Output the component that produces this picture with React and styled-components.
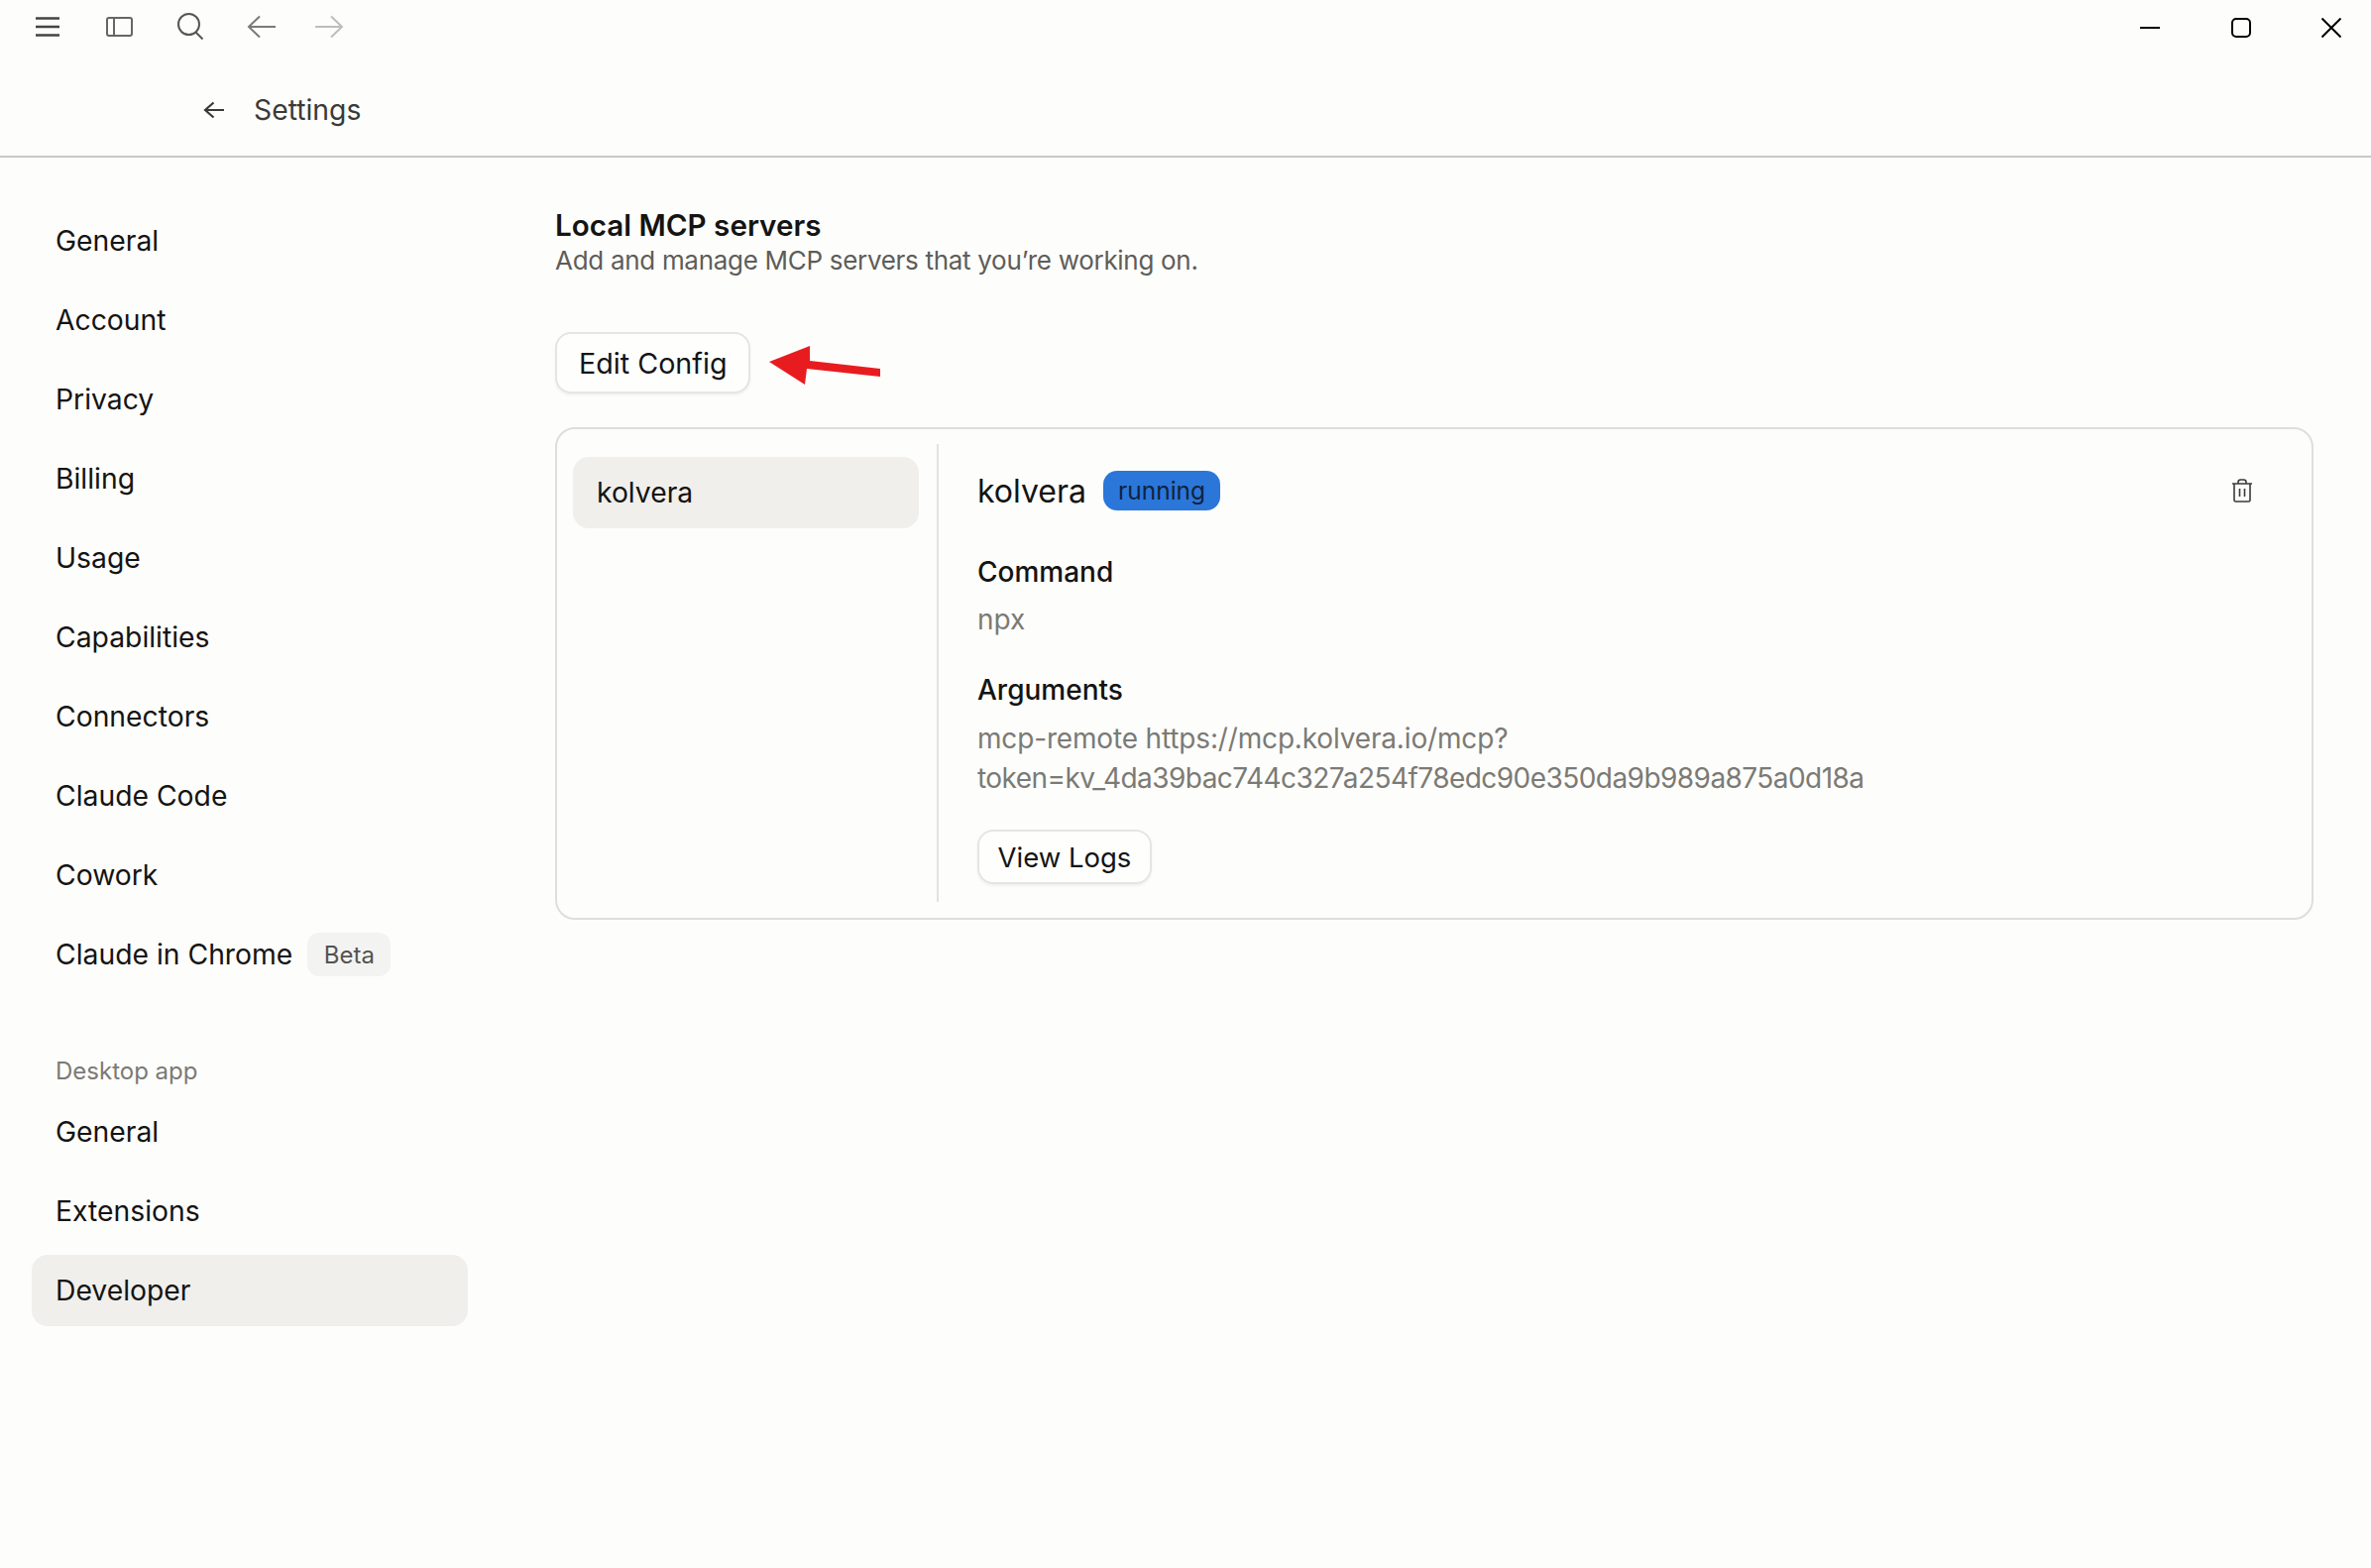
import React from 'react';
import styled, { createGlobalStyle } from 'styled-components';

const GlobalStyle = createGlobalStyle`
	html, body {
		margin: 0;
		padding: 0;
		background: #fdfdfb;
	}
	body {
		font-family: Inter, "Liberation Sans", sans-serif;
		color: #141413;
	}
	* {
		box-sizing: border-box;
	}
`;

const Page = styled.div`
	width: 2392px;
	height: 1582px;
	display: flex;
	flex-direction: column;
	background: #fdfdfb;
	overflow: hidden;
`;

const TitleBar = styled.div`
	height: 54px;
	display: flex;
	align-items: center;
	justify-content: space-between;
	padding: 0 30px 0 12px;
`;
const NavIcons = styled.div`
	display: flex;
`;
const WindowIcons = styled.div`
	display: flex;
	gap: 71.5px;
	padding-top: 1px;
`;
const Glyph = styled.svg`
	display: block;
	fill: none;
	stroke: ${(p) => p.$color || '#000'};
	stroke-width: ${(p) => p.$stroke || 2};
`;

const PageHeader = styled.header`
	height: 105px;
	display: flex;
	align-items: center;
	gap: 29px;
	padding: 10px 0 0 205px;
	border-bottom: 2px solid #c8c8c5;
`;
const PageTitle = styled.span`
	font-size: 28.3px;
	line-height: 36px;
	color: #3a3a38;
`;

const Body = styled.div`
	flex: 1;
	display: flex;
`;

const Sidebar = styled.nav`
	width: 560px;
	flex: none;
	display: flex;
	flex-direction: column;
	gap: 8px;
	padding: 48px 88px 0 32px;
`;
const NavItem = styled.div`
	height: 72px;
	display: flex;
	align-items: center;
	gap: 15px;
	padding-left: 24px;
	font-size: 28.3px;
	border-radius: 16px;
	background: ${(p) => (p.$active ? '#f0efec' : 'transparent')};
`;
const BetaTag = styled.span`
	height: 44px;
	padding: 0 16.5px;
	display: flex;
	align-items: center;
	font-size: 24px;
	color: #55544f;
	background: #f3f3f1;
	border-radius: 12px;
`;
const SectionLabel = styled.div`
	height: 40px;
	margin: 53px 0 -2px;
	padding-left: 24px;
	display: flex;
	align-items: center;
	font-size: 24px;
	color: #7b7a75;
`;

const Main = styled.main`
	flex: 1;
	min-width: 0;
	padding: 50px 58px 0 0;
`;
const Heading = styled.h1`
	margin: 0;
	font-size: 29.6px;
	line-height: 36px;
	font-weight: 600;
`;
const Subheading = styled.p`
	margin: 0;
	font-size: 26px;
	line-height: 36px;
	letter-spacing: -0.3px;
	color: #5e5d59;
`;
const ConfigRow = styled.div`
	display: flex;
	align-items: flex-start;
	margin: 54px 0 34px;
`;
const Button = styled.button`
	height: ${(p) => p.$height}px;
	padding: 0 ${(p) => p.$pad}px;
	display: flex;
	align-items: center;
	font-family: inherit;
	font-size: ${(p) => p.$size}px;
	color: #141413;
	background: #fefefd;
	border: 2px solid #e6e5e2;
	border-radius: 16px;
	box-shadow: 0 2px 3px rgba(0, 0, 0, 0.05);
`;
const Arrow = styled.svg`
	display: block;
	margin: 14px 0 0 19px;
	fill: #e81c1f;
`;

const ServerCard = styled.section`
	height: 497px;
	display: flex;
	padding: 15px 16px 16px;
	border: 2px solid #dededb;
	border-radius: 20px;
`;
const ServerList = styled.div`
	width: 369px;
	flex: none;
	padding: 13px 18px 0 0;
	border-right: 2px solid #e2e2df;
`;
const ServerItem = styled.div`
	height: 72px;
	display: flex;
	align-items: center;
	padding-left: 24px;
	font-size: 28.3px;
	background: #f0efec;
	border-radius: 16px;
`;
const ServerDetail = styled.div`
	flex: 1;
	min-width: 0;
	padding: 27px 44px 0 39px;
`;
const DetailHead = styled.div`
	height: 40px;
	display: flex;
	align-items: center;
	justify-content: space-between;
`;
const NameRow = styled.div`
	display: flex;
	align-items: center;
	gap: 17px;
`;
const ServerName = styled.span`
	font-size: 32px;
`;
const Status = styled.span`
	height: 40px;
	padding: 0 15px;
	display: flex;
	align-items: center;
	font-size: 24.5px;
	color: #10233f;
	background: #2b76d9;
	border-radius: 14px;
`;
const FieldLabel = styled.div`
	margin-top: ${(p) => p.$top}px;
	font-size: 28px;
	line-height: 36px;
	font-weight: 500;
`;
const FieldValue = styled.div`
	margin-top: ${(p) => p.$top}px;
	font-size: 28px;
	line-height: 36px;
	color: #7b7a75;
`;
const ArgLine = styled.div`
	font-size: 28px;
	line-height: 40px;
	letter-spacing: ${(p) => p.$tracking}px;
	color: #7b7a75;
`;
const ArgList = styled.div`
	margin-top: 11px;
`;
const LogsRow = styled.div`
	display: flex;
	margin-top: 32px;
`;

const navItems = ['General', 'Account', 'Privacy', 'Billing', 'Usage', 'Capabilities', 'Connectors', 'Claude Code', 'Cowork'];

const App = () => (
	<Page>
		<GlobalStyle />
		<TitleBar>
			<NavIcons>
				<Glyph width="72" height="54" viewBox="0 0 72 54" $color="#444" $stroke={2.5}>
					<path d="M24 18.5h24M24 27h24M24 35.5h24" />
				</Glyph>
				<Glyph width="72" height="54" viewBox="0 0 72 54" $color="#666">
					<rect x="24" y="18" width="25" height="18" rx="2" />
					<path d="M31 18v18" />
				</Glyph>
				<Glyph width="72" height="54" viewBox="0 0 72 54" $color="#555">
					<circle cx="34.5" cy="24.5" r="10.5" />
					<path d="M41.5 32.5l7 7" />
				</Glyph>
				<Glyph width="72" height="54" viewBox="0 0 72 54" $color="#7a7a78">
					<path d="M50 27H23M34 16.5L23 27l11 10.5" />
				</Glyph>
				<Glyph width="72" height="54" viewBox="0 0 72 54" $color="#bdbdba">
					<path d="M18 27h27M34 16.5L45 27 34 37.5" />
				</Glyph>
			</NavIcons>
			<WindowIcons>
				<Glyph width="20" height="20" viewBox="0 0 20 20">
					<path d="M0 10h20" />
				</Glyph>
				<Glyph width="20" height="20" viewBox="0 0 20 20">
					<rect x="1" y="1" width="18" height="18" rx="4" />
				</Glyph>
				<Glyph width="20" height="20" viewBox="0 0 20 20">
					<path d="M0.5 0.5l19 19M19.5 0.5l-19 19" />
				</Glyph>
			</WindowIcons>
		</TitleBar>

		<PageHeader>
			<Glyph width="22" height="18" viewBox="0 0 22 18" $color="#3a3a38" $stroke={2.2}>
				<path d="M21 9H2M10.5 1.5L2 9l8.5 7.5" />
			</Glyph>
			<PageTitle>Settings</PageTitle>
		</PageHeader>

		<Body>
			<Sidebar>
				{navItems.map((label) => (
					<NavItem key={label}>{label}</NavItem>
				))}
				<NavItem>
					Claude in Chrome
					<BetaTag>Beta</BetaTag>
				</NavItem>
				<SectionLabel>Desktop app</SectionLabel>
				<NavItem>General</NavItem>
				<NavItem>Extensions</NavItem>
				<NavItem $active>Developer</NavItem>
			</Sidebar>

			<Main>
				<Heading>Local MCP servers</Heading>
				<Subheading>Add and manage MCP servers that you’re working on.</Subheading>

				<ConfigRow>
					<Button $height={62} $pad={22} $size={28.7}>Edit Config</Button>
					<Arrow width="112" height="39" viewBox="0 0 112 39">
						<polygon points="0,16 41,0 41,15 112,23 112,31 38,23 36,39" />
					</Arrow>
				</ConfigRow>

				<ServerCard>
					<ServerList>
						<ServerItem>kolvera</ServerItem>
					</ServerList>
					<ServerDetail>
						<DetailHead>
							<NameRow>
								<ServerName>kolvera</ServerName>
								<Status>running</Status>
							</NameRow>
							<Glyph width="20" height="24" viewBox="0 0 20 24" $color="#3a3a38" $stroke={1.6}>
								<path d="M0 5h20M6 5V3.5C6 2 7 1 8.5 1h3C13 1 14 2 14 3.5V5" />
								<path d="M2 5v16.5c0 1 .6 1.5 1.5 1.5h13c.9 0 1.5-.5 1.5-1.5V5" />
								<path d="M7.5 10v8M12.5 10v8" />
							</Glyph>
						</DetailHead>
						<FieldLabel $top={44}>Command</FieldLabel>
						<FieldValue $top={12}>npx</FieldValue>
						<FieldLabel $top={35}>Arguments</FieldLabel>
						<ArgList>
							<ArgLine $tracking={-0.16}>mcp-remote https://mcp.kolvera.io/mcp?</ArgLine>
							<ArgLine $tracking={-0.55}>token=kv_4da39bac744c327a254f78edc90e350da9b989a875a0d18a</ArgLine>
						</ArgList>
						<LogsRow>
							<Button $height={55} $pad={18.5} $size={27.5}>View Logs</Button>
						</LogsRow>
					</ServerDetail>
				</ServerCard>
			</Main>
		</Body>
	</Page>
);

export default App;
